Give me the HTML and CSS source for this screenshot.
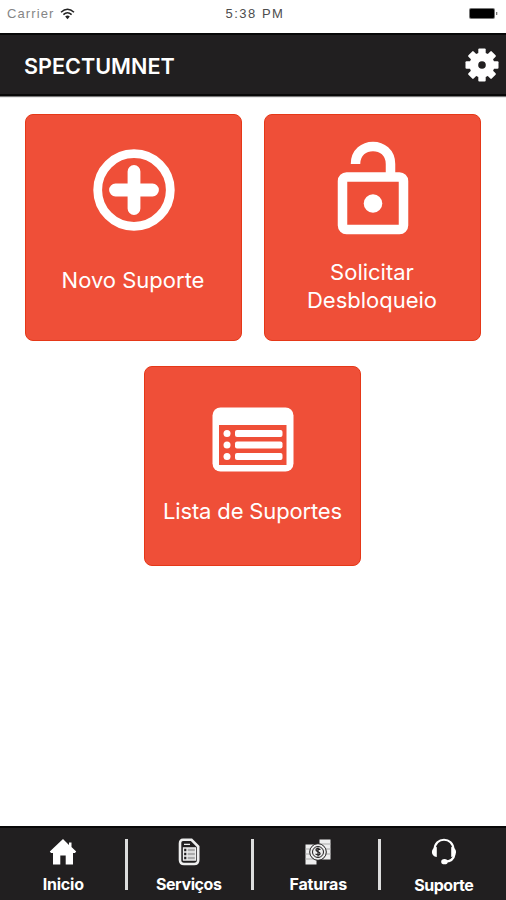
FILE: index.html
```html
<!DOCTYPE html>
<html lang="pt-BR">
<head>
<meta charset="utf-8">
<title>SPECTUMNET</title>
<link rel="stylesheet" href="styles.css">
</head>
<body>
<div class="app">
  <div class="status">
    <div class="carrier"><span>Carrier</span>
      <svg width="15" height="12" viewBox="0 0 15 12" fill="none" stroke="#222" stroke-width="1.5"><path d="M1 4.2Q7.5-1.8 14 4.2M3.4 6.6Q7.5 2.8 11.600 6.600"/><path d="M5.200 8.600Q7.500 6.600 9.800 8.600L7.500 11.200Z" fill="#222" stroke="none"/></svg>
    </div>
    <span class="time">5:38 PM</span>
    <div class="battery"><svg width="31" height="13" viewBox="0 0 31 13"><rect x="1" y="1" width="26" height="11" rx="2" fill="#777"/><rect x="2" y="2" width="24" height="9" rx="1"/><path d="M28 5h1.300v3H28z" fill="#777"/></svg></div>
  </div>
  <header class="header">
    <h1 class="title">SPECTUMNET</h1>
    <svg class="gear" width="34" height="34" viewBox="-17 -17 34 34"><g fill="#fff"><circle r="12.500"/><g id="t"><rect x="-3.700" y="-16.500" width="7.400" height="33" rx="1"/><rect x="-16.500" y="-3.700" width="33" height="7.400" rx="1"/></g><use href="#t" transform="rotate(45)"/></g><circle r="3.800" fill="#211f20"/></svg>
  </header>
  <main class="cards">
    <section class="card card-new">
      <svg width="82" height="82" viewBox="0 0 82 82" fill="none" stroke="#fff" stroke-linecap="round"><circle cx="41" cy="41" r="36.300" stroke-width="8.800"/><path d="M41 22.500v37M22.500 41h37" stroke-width="12.800"/></svg>
      <p>Novo Suporte</p>
    </section>
    <section class="card card-unlock">
      <svg width="72" height="94" viewBox="0 0 72 94" fill="none" stroke="#fff" stroke-width="9.500"><rect x="5.500" y="36" width="61" height="52.500" rx="4"/><path d="M18.500 23C18.500-.5 53.500-.5 53.500 23V34"/><circle cx="36" cy="62.500" r="9.300" fill="#fff" stroke="none"/></svg>
      <p>Solicitar<br>Desbloqueio</p>
    </section>
    <section class="card card-list">
      <svg width="82" height="66" viewBox="0 0 82 66"><rect x=".5" y=".5" width="81" height="64" rx="8" fill="#fff"/><path d="M7 18h67.500v40H7z" fill="#ef4f38"/><g fill="#fff"><circle cx="15" cy="26.500" r="3.500"/><circle cx="15" cy="38" r="3.500"/><circle cx="15" cy="49.500" r="3.500"/><rect x="23" y="23" width="47.500" height="7" rx="2"/><rect x="23" y="34.500" width="47.500" height="7" rx="2"/><rect x="23" y="46" width="47.500" height="7" rx="2"/></g></svg>
      <p>Lista de Suportes</p>
    </section>
  </main>
  <nav class="nav">
    <a class="item"><svg width="28" height="28" viewBox="0 0 28 28"><path fill="#fff" d="M14 1 .8 13.500 2 15h2v11.500h7.300v-9h5.400v9H24V15h2l1.200-1.500L22.500 9V4.500h-2.500V7Z"/></svg><span>Inicio</span></a>
    <a class="item services"><svg width="28" height="28" viewBox="0 0 28 28" fill="none" stroke="#eee"><path stroke-width="2.600" d="M8 1.800h8.500l6.700 6.700V22q0 4-4 4H9q-4 0-4-4V5.500q0-3.700 3-3.700Z"/><path fill="#aaa" d="M12 10h8.500v12H12z" stroke="none"/><path d="M9 6.300h6M8.500 10h12v12h-12zM8.500 14h12M8.500 18h12M12 10v12" stroke-width="1.300"/></svg><span>Serviços</span></a>
    <a class="item bills"><svg width="28" height="28" viewBox="0 0 28 28"><path d="M1.500 6.500h11v20h-11zM15.500 1.500H26.500v20H15.500z" fill="#eee"/><path d="M1.500 11h11m-11 5h11m-11 5h11M15.500 6h11M15.500 11h11M15.500 16h11" stroke="#aaa"/><circle cx="14" cy="14" r="8.300" fill="#eee" stroke="#211f20"/><circle cx="14" cy="14" r="5.500" fill="none" stroke="#211f20"/><path d="M16.500 11.500q-4.500-2-4.500.5c0 2 4 1.500 4 3.500q0 2.500-4.500.5M14 9.500v9" fill="none" stroke="#211f20" stroke-width="1.300"/></svg><span>Faturas</span></a>
    <a class="item support"><svg width="28" height="28" viewBox="0 0 28 28" fill="none" stroke="#fff" stroke-width="2.200"><path d="M4.500 12C4.500-1.700 23.500-1.700 23.500 12M24.500 16q-1 7.500-9.500 7.500"/><path d="M6.800 9v10C.3 18.500.3 9.500 6.800 9ZM21.200 9v10c6.500-.5 6.500-9.500 0-10Z" fill="#fff" stroke="none"/><ellipse cx="14.500" cy="23.700" rx="3.300" ry="2.600" fill="#fff" stroke="none"/></svg><span>Suporte</span></a>
  </nav>
</div>
</body>
</html>
```
FILE: styles.css
```css
* { box-sizing: border-box; }
body { margin: 0; background: #fff; font-family: Inter, "Liberation Sans", sans-serif; }
.app { height: 900px; display: flex; flex-direction: column; }
.status { height: 33px; display: grid; grid-template-columns: 1fr auto 1fr; padding: 0 7px; color: #4d4d4d; font: 13px/27px "Liberation Sans", sans-serif; }
.carrier { display: flex; align-items: center; height: 27px; gap: 6px; color: #858585; letter-spacing: 1.1px; }
.time { letter-spacing: 1.500px; padding-left: 4px; }
.battery { display: flex; justify-content: flex-end; align-items: center; height: 27px; }
.header { height: 63px; background: #211f20; border: solid #080808; border-width: 2px 0; box-shadow: 0 1px 1px #777; display: flex; align-items: center; justify-content: space-between; padding: 0 7px 0 24px; }
.title { margin: 2px 0 0; color: #fff; font-size: 21.600px; font-weight: 600; }
.cards { flex: 1; display: grid; grid-template-columns: 217px 217px; grid-template-rows: 227px 200px; column-gap: 22px; row-gap: 25px; justify-content: center; padding: 18px 1px 0 0; }
.card { background: #ef4f38; border: 1px solid #e53818; border-radius: 8px; display: flex; flex-direction: column; align-items: center; color: #fff; font-size: 22px; line-height: 28px; text-align: center; }
.card p { margin: 0; font-weight: 400; }
.card-new { padding-top: 34px; gap: 35px; }
.card-unlock { padding-top: 26px; gap: 23px; }
.card-new svg, .card-unlock svg { margin-left: 2px; }
.card-list { grid-column: 1 / -1; width: 217px; justify-self: center; padding-top: 40px; gap: 24px; letter-spacing: -.15px; }
.nav { height: 74px; background: #211f20; border-top: 2px solid #080808; display: grid; grid-template-columns: repeat(4, 1fr); }
.item { position: relative; display: flex; flex-direction: column; align-items: center; padding-top: 10px; color: #fff; font-size: 16px; line-height: 20px; font-weight: 700; letter-spacing: -.2px; gap: 8px; }
.item + .item::before { content: ""; position: absolute; left: -2px; top: 11px; width: 3px; height: 51px; background: #ddd; }
.services { letter-spacing: -.4px; padding-right: 2px; }
.bills { padding-left: 4px; }
.support { gap: 9px; padding-left: 2px; letter-spacing: -.5px; }
```
